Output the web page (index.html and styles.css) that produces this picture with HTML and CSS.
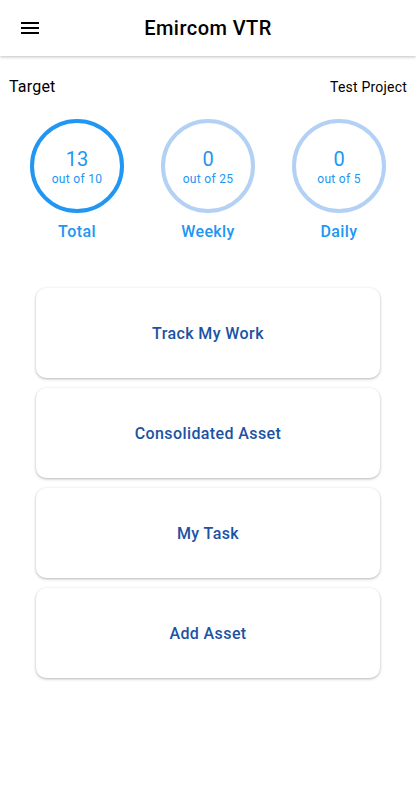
FILE: index.html
```html
<!DOCTYPE html>
<html lang="en">
<head>
    <meta charset="UTF-8">
    <meta name="viewport" content="width=device-width, initial-scale=1.0">
    <title>Emircom VTR</title>
    <link rel="stylesheet" href="styles.css">
</head>
<body>
    <div class="appbar">
        <div class="menu">
            <svg width="24" height="24" viewBox="0 0 24 24"><path d="M3 18h18v-2H3v2zm0-5h18v-2H3v2zm0-7v2h18V6H3z" fill="#000"/></svg>
        </div>
        <div class="apptitle">Emircom VTR</div>
    </div>

    <div class="targets">
        <div class="head">
            <span class="head-left">Target</span>
            <span class="head-right">Test Project</span>
        </div>
        <div class="rings">
            <div class="ring-item">
                <div class="ring active">
                    <div class="num">13</div>
                    <div class="outof">out of 10</div>
                </div>
                <div class="label">Total</div>
            </div>
            <div class="ring-item">
                <div class="ring">
                    <div class="num">0</div>
                    <div class="outof">out of 25</div>
                </div>
                <div class="label">Weekly</div>
            </div>
            <div class="ring-item">
                <div class="ring">
                    <div class="num">0</div>
                    <div class="outof">out of 5</div>
                </div>
                <div class="label">Daily</div>
            </div>
        </div>
    </div>

    <div class="cards">
        <div class="card">Track My Work</div>
        <div class="card">Consolidated Asset</div>
        <div class="card">My Task</div>
        <div class="card">Add Asset</div>
    </div>
</body>
</html>
```

FILE: styles.css
```css
body {
    margin: 0;
    font-family: Roboto, "Noto Sans", sans-serif;
    background: #fff;
    color: #000;
}

.appbar {
    height: 56px;
    display: flex;
    align-items: center;
    position: relative;
    box-shadow: 0 1px 3px rgba(0, 0, 0, 0.25);
    background: #fff;
}
.menu {
    width: 24px;
    height: 24px;
    margin-left: 18px;
}
.menu svg {
    display: block;
}
.apptitle {
    flex: 1;
    text-align: center;
    font-size: 20px;
    font-weight: 500;
    letter-spacing: 0.45px;
    margin-right: 42px;
    margin-top: -1px;
}

.targets {
    padding: 21px 9px 0 9px;
}
.head {
    display: flex;
    justify-content: space-between;
    align-items: center;
}
.head-left {
    font-size: 16px;
    letter-spacing: 0.2px;
}
.head-right {
    font-size: 14px;
    letter-spacing: 0.2px;
}

.rings {
    display: flex;
    justify-content: center;
    gap: 37px;
    margin-top: 23px;
}
.ring-item {
    display: flex;
    flex-direction: column;
    align-items: center;
}
.ring {
    width: 86px;
    height: 86px;
    border: 4px solid #b3d1f4;
    border-radius: 50%;
    display: flex;
    flex-direction: column;
    align-items: center;
    justify-content: center;
    color: #2196f3;
}
.ring.active {
    border-color: #2196f3;
}
.num {
    font-size: 20px;
    line-height: 24px;
    margin-top: 2px;
}
.outof {
    font-size: 12px;
    line-height: 16px;
    letter-spacing: 0.3px;
}
.label {
    margin-top: 9px;
    font-size: 16px;
    font-weight: 500;
    letter-spacing: 0.4px;
    color: #2196f3;
}

.cards {
    display: flex;
    flex-direction: column;
    gap: 10px;
    padding: 47px 36px 20px 36px;
}
.card {
    height: 90px;
    border-radius: 10px;
    background: #fff;
    box-shadow: 0 1px 3px rgba(0, 0, 0, 0.3);
    display: flex;
    align-items: center;
    justify-content: center;
    font-size: 16px;
    font-weight: 500;
    letter-spacing: 0.4px;
    color: #1c52a4;
}
```
